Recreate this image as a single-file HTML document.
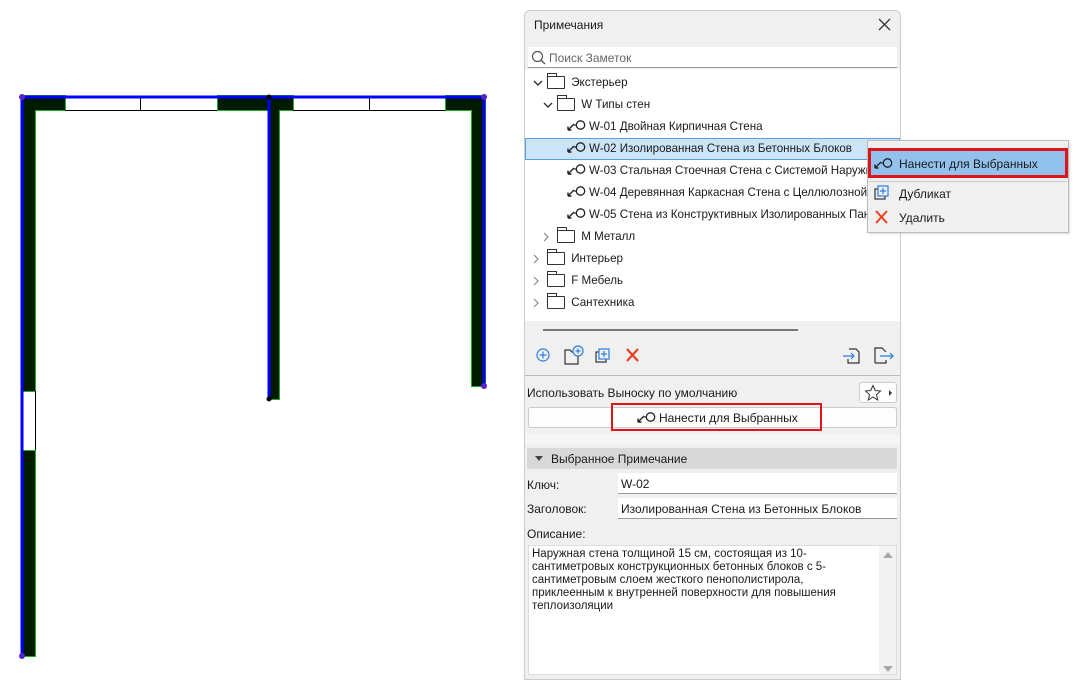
<!DOCTYPE html>
<html><head><meta charset="utf-8"><style>
*{margin:0;padding:0;box-sizing:border-box}
body{width:1076px;height:674px;background:#fff;position:relative;overflow:hidden;font-family:"Liberation Sans","DejaVu Sans",sans-serif;font-size:12px;color:#1a1a1a}
.a{position:absolute}
.t{position:absolute;white-space:nowrap;line-height:14px}
.fold{display:inline-block;width:18px;height:13px;border:1px solid #333;border-radius:1px;vertical-align:middle;position:relative;margin-right:3px}
.fold:before{content:"";position:absolute;left:-1px;top:-4px;width:8px;height:3px;border:1px solid #333;border-bottom:none}
.row{position:absolute;height:22px;line-height:22px;white-space:nowrap;font-size:11.6px}
.li{display:inline-block;width:19px;height:12px;vertical-align:-1px;margin-right:3px}
</style></head><body>
<svg width="0" height="0" style="position:absolute"><defs><symbol id="L" viewBox="0 0 19 12"><path d="M1 11L7 5M1 11V7.5M1 11H4.5" stroke="#222" stroke-width="1.4" fill="none"/><path d="M7 6H9" stroke="#222" stroke-width="1.2"/><circle cx="13.5" cy="6" r="4.2" fill="none" stroke="#222" stroke-width="1.3"/></symbol></defs></svg>
<svg class="a" style="left:0;top:0" width="520" height="674">
<g fill="#001a00" stroke="#22aa22" stroke-width="1">
<path d="M21.5 95.5H65.5V110.5H35.5V391.5H21.5Z"/>
<rect x="21.5" y="450.5" width="14" height="206"/>
<path d="M217.5 95.5H293.5V110.5H279.5V399.5H268.5V110.5H217.5Z"/>
<path d="M445.5 95.5H485.5V386.5H471.5V110.5H445.5Z"/>
</g>
<g fill="none" stroke="#000" stroke-width="1">
<path d="M65 110.5H217M293 110.5H445M140.5 96V110M369.5 96V110M35.5 391V450"/>
</g>
<g stroke="#0000ff" stroke-width="3" fill="none">
<path d="M22 97H485M22 97V656M269 97V399M484 97V386"/>
</g>
<g fill="#5522cc"><circle cx="22" cy="97" r="3"/><circle cx="484" cy="97" r="3"/><circle cx="484" cy="386" r="3"/><circle cx="22" cy="656" r="3"/></g>
<g fill="#000"><circle cx="269" cy="97" r="2.5"/><circle cx="269" cy="399" r="2.5"/></g>
</svg>

<div class="a" style="left:524px;top:10px;width:377px;height:670px;background:#f0f0f0;border:1px solid #ccc;border-radius:6px 6px 0 0"></div>
<div class="t" style="left:534px;top:18px">Примечания</div>
<svg class="a" style="left:878px;top:18px" width="13" height="13"><path d="M1 1L12 12M12 1L1 12" stroke="#333" stroke-width="1.3"/></svg>
<div class="a" style="left:528px;top:47px;width:369px;height:21px;background:#fff;border-bottom:1px solid #999"></div>
<svg class="a" style="left:531px;top:50px" width="16" height="16"><circle cx="6.5" cy="6.5" r="5" fill="none" stroke="#555" stroke-width="1.2"/><path d="M10 10L14 14" stroke="#555" stroke-width="1.3"/></svg>
<div class="t" style="left:549px;top:51px;color:#666">Поиск Заметок</div>
<div class="a" style="left:525px;top:69px;width:375px;height:252px;background:#fff"></div>
<div class="a" style="left:525px;top:138px;width:375px;height:22px;background:#cce4f7;border:1px solid #5aa0dc"></div>

<svg class="a" style="left:531px;top:78px" width="30" height="40" fill="none" stroke="#333" stroke-width="1.4"><path d="M3 3L7 7L11 3M13 25L17 29L21 25"/></svg>
<svg class="a" style="left:531px;top:230px" width="20" height="80" fill="none" stroke="#888" stroke-width="1.2"><path d="M13 3L17 7L13 11M3 25L7 29L3 33M3 47L7 51L3 55M3 69L7 73L3 77"/></svg>
<div class="row" style="left:547px;top:72px"><span class="fold"></span> Экстерьер</div>
<div class="row" style="left:557px;top:94px"><span class="fold"></span> W Типы стен</div>
<div class="row" style="left:567px;top:116px"><svg class="li"><use href="#L"/></svg>W-01 Двойная Кирпичная Стена</div>
<div class="row" style="left:567px;top:138px"><svg class="li"><use href="#L"/></svg>W-02 Изолированная Стена из Бетонных Блоков</div>
<div class="row" style="left:567px;top:160px"><svg class="li"><use href="#L"/></svg>W-03 Стальная Стоечная Стена с Системой Наружно</div>
<div class="row" style="left:567px;top:182px"><svg class="li"><use href="#L"/></svg>W-04 Деревянная Каркасная Стена с Целлюлозной И</div>
<div class="row" style="left:567px;top:204px"><svg class="li"><use href="#L"/></svg>W-05 Стена из Конструктивных Изолированных Пан</div>
<div class="row" style="left:557px;top:226px"><span class="fold"></span> M Металл</div>
<div class="row" style="left:547px;top:248px"><span class="fold"></span> Интерьер</div>
<div class="row" style="left:547px;top:270px"><span class="fold"></span> F Мебель</div>
<div class="row" style="left:547px;top:292px"><span class="fold"></span> Сантехника</div>

<div class="a" style="left:543px;top:329px;width:255px;height:2px;background:#777"></div>
<svg class="a" style="left:530px;top:342px" width="370" height="26" fill="none" stroke-width="1.2">
<circle cx="13" cy="13" r="6" stroke="#2a7de1"/><path d="M13 9.5V16.5M9.5 13H16.5" stroke="#2a7de1"/>
<path d="M35 8H40L42 10H48V22H35Z" stroke="#333"/><circle cx="48" cy="9" r="5" stroke="#2a7de1" fill="#f0f0f0"/><path d="M48 6.5V11.5M45.5 9H50.5" stroke="#2a7de1"/>
<rect x="66" y="10" width="10" height="10" stroke="#333"/><rect x="69" y="7" width="10" height="10" stroke="#2a7de1" fill="#f0f0f0"/><path d="M74 9V15M71 12H77" stroke="#2a7de1"/>
<path d="M97 7L108 19M108 7L97 19" stroke="#e8401c" stroke-width="2.2"/>
<path d="M319 7H326L329 10V21H318V17" stroke="#333"/><path d="M313 14H324M321 11L324 14L321 17" stroke="#2a7de1"/>
<path d="M345 21V6H352L356 10V10" stroke="#333"/><path d="M345 21H356V18" stroke="#333"/><path d="M350 14H363M360 11L363 14L360 17" stroke="#2a7de1"/>
</svg>
<div class="a" style="left:525px;top:375px;width:375px;height:1px;background:#bbb"></div>
<div class="t" style="left:527px;top:386px">Использовать Выноску по умолчанию</div>
<div class="a" style="left:859px;top:382px;width:38px;height:21px;background:#fff;border:1px solid #ccc;border-radius:3px"></div>
<svg class="a" style="left:864px;top:384px" width="32" height="18"><path d="M9 1.5L11.3 6.5L16.5 7L12.5 10.5L13.7 16L9 13L4.3 16L5.5 10.5L1.5 7L6.7 6.5Z" fill="none" stroke="#333"/><path d="M25 6L28 9L25 12Z" fill="#333"/></svg>
<div class="a" style="left:528px;top:407px;width:369px;height:21px;background:#fdfdfd;border:1px solid #ccc;border-radius:3px"></div>
<div class="a" style="left:611px;top:403px;width:211px;height:28px;border:2px solid #e0141c"></div>
<div class="t" style="left:637px;top:411px"><svg class="li"><use href="#L"/></svg>Нанести для Выбранных</div>
<div class="a" style="left:525px;top:434px;width:375px;height:10px;background:#f5f5f5"></div>
<div class="a" style="left:527px;top:448px;width:370px;height:21px;background:#d8d8d8;border-radius:2px"></div>
<svg class="a" style="left:534px;top:455px" width="10" height="8"><path d="M1 1H9L5 6Z" fill="#444"/></svg>
<div class="t" style="left:551px;top:452px">Выбранное Примечание</div>
<div class="t" style="left:527px;top:478px">Ключ:</div>
<div class="a" style="left:618px;top:473px;width:279px;height:21px;background:#fff;border-bottom:1px solid #999"></div>
<div class="t" style="left:621px;top:477px">W-02</div>
<div class="t" style="left:527px;top:502px">Заголовок:</div>
<div class="a" style="left:618px;top:498px;width:279px;height:21px;background:#fff;border-bottom:1px solid #999"></div>
<div class="t" style="left:621px;top:502px">Изолированная Стена из Бетонных Блоков</div>
<div class="t" style="left:527px;top:527px">Описание:</div>
<div class="a" style="left:528px;top:545px;width:369px;height:130px;background:#fff;border:1px solid #ddd"></div>
<div class="a" style="left:879px;top:546px;width:17px;height:128px;background:#f3f3f3"></div>
<svg class="a" style="left:882px;top:550px" width="12" height="124"><path d="M1 8L6 2L11 8Z" fill="#aaa"/><path d="M1 116L6 122L11 116Z" fill="#aaa"/></svg>
<div class="a" style="left:532px;top:548px;line-height:13px;font-size:11.5px;white-space:nowrap">Наружная стена толщиной 15 см, состоящая из 10-<br>сантиметровых конструкционных бетонных блоков с 5-<br>сантиметровым слоем жесткого пенополистирола,<br>приклеенным к внутренней поверхности для повышения<br>теплоизоляции</div>

<div class="a" style="left:867px;top:140px;width:202px;height:93px;background:#f0f0f0;border:1px solid #bbb;box-shadow:1px 1px 2px rgba(0,0,0,.15)"></div>
<div class="a" style="left:868px;top:148px;width:200px;height:30px;background:#91c1ec;border:3px solid #e0141c"></div>
<div class="t" style="left:874px;top:157px"><svg class="li" style="margin-right:6px"><use href="#L"/></svg>Нанести для Выбранных</div>
<div class="a" style="left:868px;top:181px;width:200px;height:1px;background:#ccc"></div>
<svg class="a" style="left:873px;top:184px" width="20" height="44" fill="none" stroke-width="1.2">
<rect x="2" y="5" width="10" height="10" stroke="#333"/><rect x="5" y="2" width="10" height="10" stroke="#2a7de1" fill="#f0f0f0"/><path d="M10 4V10M7 7H13" stroke="#2a7de1"/>
<path d="M3 27L14 39M14 27L3 39" stroke="#e8401c" stroke-width="2"/>
</svg>
<div class="t" style="left:899px;top:187px">Дубликат</div>
<div class="t" style="left:899px;top:211px">Удалить</div>
</body></html>
